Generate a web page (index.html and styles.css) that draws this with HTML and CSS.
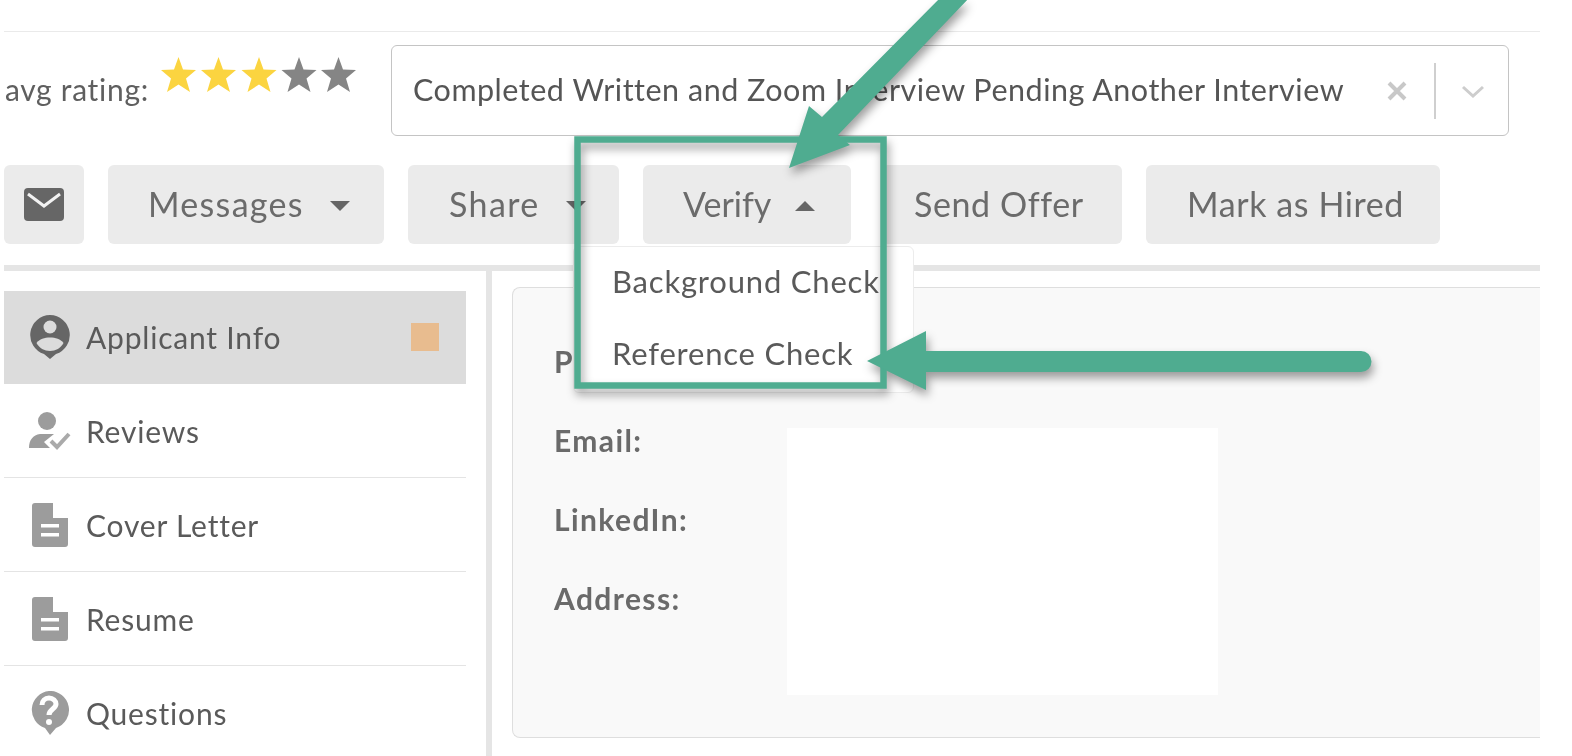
FILE: index.html
```html
<!DOCTYPE html>
<html lang="en">
<head>
<meta charset="utf-8">
<title>Applicant</title>
<link rel="stylesheet" href="styles.css">
</head>
<body>
<div class="page">
  <div class="topline"></div>
  <div class="status-row">
    <div class="rating">
      <span class="rating-label">avg rating:</span>
      <svg class="stars" viewBox="0 0 196 36" width="196" height="36">
        <polygon class="star-on" points="17.5,0 22,12.5 35,13 25,21.5 29,35 17.5,27.5 6,35 10,21.5 0,13 13,12.5"/>
        <polygon class="star-on" points="57.5,0 62,12.5 75,13 65,21.5 69,35 57.5,27.5 46,35 50,21.5 40,13 53,12.5"/>
        <polygon class="star-on" points="98,0 102.500,12.500 115.500,13 105.500,21.500 109.500,35 98,27.500 86.500,35 90.500,21.500 80.500,13 93.500,12.500"/>
        <polygon class="star-off" points="138,0 142.500,12.500 155.500,13 145.500,21.500 149.500,35 138,27.500 126.500,35 130.500,21.500 120.500,13 133.500,12.500"/>
        <polygon class="star-off" points="177.500,0 182,12.500 195,13 185,21.500 189,35 177.500,27.500 166,35 170,21.500 160,13 173,12.500"/>
      </svg>
    </div>
    <div class="select">
      <span class="select-value">Completed Written and Zoom Interview Pending Another Interview</span>
      <svg class="select-clear" viewBox="0 0 20 20" width="20" height="20"><path d="M2 2 L18 18 M18 2 L2 18"/></svg>
      <span class="select-sep"></span>
      <svg class="select-chevron" viewBox="0 0 24 14" width="24" height="14"><path d="M2 3 L12 12 L22 3"/></svg>
    </div>
  </div>
  <div class="actions">
    <button class="btn btn-icon" type="button">
      <svg viewBox="0 0 40 33" width="40" height="33"><rect width="40" height="33" rx="4" class="env-body"/><path class="env-flap" d="M4 6 L20 18 L36 6"/></svg>
    </button>
    <button class="btn btn-messages" type="button">Messages<span class="caret caret-down"></span></button>
    <button class="btn btn-share" type="button">Share<span class="caret caret-down"></span></button>
    <div class="verify-wrap">
      <button class="btn btn-verify" type="button">Verify<span class="caret caret-up"></span></button>
      <div class="menu">
        <div class="menu-item">Background Check</div>
        <div class="menu-item">Reference Check</div>
      </div>
    </div>
    <button class="btn btn-offer" type="button">Send Offer</button>
    <button class="btn btn-hired" type="button">Mark as Hired</button>
  </div>
  <div class="divider"></div>
  <div class="content">
    <nav class="sidebar">
      <a class="nav-item nav-active">
        <svg class="nav-icon" viewBox="0 0 40 44" width="40" height="44"><path class="ic-dark" d="M20 0a20 20 0 0 1 6 39l-6 5-6-5A20 20 0 0 1 20 0z"/><circle class="ic-white" cx="20" cy="12" r="6.500"/><path class="ic-white" d="M6.500 28c3-4 8-5.500 13.500-5.500S30.500 24 33.500 28c-2.500 5-8 8-13.500 8S9 33 6.500 28z"/></svg>
        <span class="nav-label">Applicant Info</span>
        <span class="nav-flag"></span>
      </a>
      <a class="nav-item">
        <svg class="nav-icon" viewBox="0 0 42 38" width="42" height="38"><circle class="ic-grey" cx="18" cy="9" r="9"/><path class="ic-grey" d="M0 36c0-8 4-13 11-14h14l-10 8 6 6z"/><path class="ic-check" d="M22 29l6 6 12-13"/></svg>
        <span class="nav-label">Reviews</span>
      </a>
      <a class="nav-item">
        <svg class="nav-icon" viewBox="0 0 36 44" width="36" height="44"><path class="ic-grey" d="M3 0H21V15H36V41a3 3 0 0 1-3 3H3a3 3 0 0 1-3-3V3a3 3 0 0 1 3-3z"/><rect class="ic-white" x="9" y="21" width="18" height="3.500"/><rect class="ic-white" x="9" y="30" width="18" height="3.500"/></svg>
        <span class="nav-label">Cover Letter</span>
      </a>
      <a class="nav-item">
        <svg class="nav-icon" viewBox="0 0 36 44" width="36" height="44"><path class="ic-grey" d="M3 0H21V15H36V41a3 3 0 0 1-3 3H3a3 3 0 0 1-3-3V3a3 3 0 0 1 3-3z"/><rect class="ic-white" x="9" y="21" width="18" height="3.500"/><rect class="ic-white" x="9" y="30" width="18" height="3.500"/></svg>
        <span class="nav-label">Resume</span>
      </a>
      <a class="nav-item nav-last">
        <svg class="nav-icon nav-icon-left" viewBox="0 0 38 44" width="38" height="44"><path class="ic-grey" d="M19 0a19 19 0 0 1 7 37l-6 7-5-7A19 19 0 0 1 19 0z"/><path class="ic-qmark" d="M12 14c0-4 3-7 7-7s7 3 7 6c0 5-7 5-7 11"/><circle class="ic-white" cx="19" cy="31" r="3"/></svg>
        <span class="nav-label">Questions</span>
      </a>
    </nav>
    <div class="vrule"></div>
    <section class="panel">
      <div class="field">P</div>
      <div class="field">Email:</div>
      <div class="field">LinkedIn:</div>
      <div class="field">Address:</div>
      <div class="redaction"></div>
    </section>
  </div>
  <svg class="annotations" viewBox="0 0 1572 756" width="1572" height="756">
    <rect class="callout" x="577.500" y="139.500" width="306" height="246"/>
    <polygon class="arrow" points="942,-4 971,-4 838,135 850,145 789,168 809,106 822,117"/>
    <path class="arrow" d="M867 361 L926 331 V351 H1361 a10.500 10.500 0 0 1 0 21 H926 V390 Z"/>
  </svg>
</div>
</body>
</html>
```
FILE: styles.css
```css
* { box-sizing: border-box; }
html, body { margin: 0; padding: 0; background: #fff; }
body { font-family: "Lato", "Liberation Sans", sans-serif; color: #5f5f5f; }

.page {
  position: relative;
  width: 1572px;
  height: 756px;
  overflow: hidden;
  padding: 31px 32px 0 4px;
  background: #fff;
  filter: blur(0.45px);
}

.topline { height: 1px; background: #eaeaea; }

.status-row { display: flex; align-items: flex-start; height: 133px; padding-top: 13px; }
.rating { display: flex; align-items: flex-start; width: 387px; height: 91px; }
.rating-label { font-size: 30px; line-height: 36px; letter-spacing: .7px; margin: 26px 0 0 1px; width: 156px; white-space: nowrap; }
.stars { margin-top: 12px; }
.star-on { fill: #fbd440; }
.star-off { fill: #858585; }

.select {
  display: flex;
  align-items: center;
  width: 1118px;
  height: 91px;
  border: 1.5px solid #c4c4c4;
  border-radius: 6px;
  padding-left: 21px;
}
.select-value { font-size: 30.5px; letter-spacing: .52px; width: 974px; padding-bottom: 4px; color: #555; white-space: nowrap; }
.select-clear { fill: none; stroke: #c8c8c8; stroke-width: 4; }
.select-sep { width: 1.500px; height: 56px; background: #cfcfcf; margin-left: 27px; }
.select-chevron { margin-left: 25px; fill: none; stroke: #cdcdcd; stroke-width: 3; }

.actions { display: flex; gap: 24px; height: 79px; }
.btn {
  display: flex;
  align-items: center;
  height: 79px;
  border: 0;
  border-radius: 6px;
  background: #ebebeb;
  color: #6b6b6b;
  font-family: inherit;
  font-size: 34px;
  letter-spacing: .6px;
  padding: 0 0 3px 41px;
  white-space: nowrap;
}
.btn-icon { width: 80px; padding: 0 0 0 20px; }
.btn-messages { width: 276px; letter-spacing: 1.3px; padding-left: 40px; }
.btn-share { width: 211px; letter-spacing: 1.4px; }
.btn-verify { width: 208px; padding-left: 40px; letter-spacing: 0; }
.btn-offer { width: 241px; margin-left: 6px; padding-left: 33px; }
.btn-hired { width: 294px; }
.env-body { fill: #666; }
.env-flap { fill: none; stroke: #f2f2f2; stroke-width: 3; }

.caret { width: 0; height: 0; margin: 5px 0 0 26px; border-left: 10px solid transparent; border-right: 10px solid transparent; }
.caret-down { border-top: 10px solid #666; }
.caret-up { margin-left: 24px; border-bottom: 10px solid #666; }

.verify-wrap { position: relative; }
.menu {
  position: absolute;
  left: -70px;
  top: 81px;
  width: 341px;
  height: 147px;
  background: #fff;
  border: 1px solid #ececec;
  border-radius: 6px;
  z-index: 2;
}
.menu-item { height: 72px; display: flex; align-items: center; padding: 0 0 5px 38px; font-size: 31px; letter-spacing: .8px; color: #5a5a5a; white-space: nowrap; }

.divider { height: 6px; margin-top: 21px; background: #e5e5e5; }

.content { display: flex; height: 485px; }
.sidebar { width: 462px; padding-top: 20px; }
.nav-item { display: flex; align-items: center; height: 94px; padding-left: 25px; border-bottom: 1.500px solid #e4e4e4; }
.nav-active { height: 93px; padding-bottom: 2px; background: #dcdcdc; border-bottom: 0; }
.nav-last { border-bottom: 0; }
.nav-icon { flex: none; width: 42px; margin-right: 15px; }
.nav-icon-left { margin-left: -1px; margin-right: 16px; }
.nav-label { font-size: 30px; letter-spacing: .8px; color: #5a5a5a; flex: 1; }
.nav-flag { width: 28px; height: 28px; margin-right: 27px; background: #e8bc8f; }
.ic-dark { fill: #666; }
.ic-grey { fill: #9c9c9c; }
.ic-white { fill: #fff; }
.nav-active .ic-white { fill: #dcdcdc; }
.ic-check { fill: none; stroke: #aaa; stroke-width: 4; }
.ic-qmark { fill: none; stroke: #fff; stroke-width: 5; }

.vrule { width: 6px; height: 485px; margin-left: 20px; background: #e5e5e5; }

.panel {
  position: relative;
  flex: 1;
  height: 451px;
  margin: 16px 0 0 20px;
  padding: 33px 0 0 41px;
  background: #f9f9f9;
  border: 1.500px solid #dedede;
  border-right: 0;
  border-radius: 8px 0 0 8px;
}
.field { height: 79px; display: flex; align-items: center; font-size: 30px; letter-spacing: 1.4px; font-weight: 700; color: #6a6a6a; }
.redaction { position: absolute; left: 274px; top: 140px; width: 431px; height: 267px; background: #fff; }

.annotations { position: absolute; left: 0; top: 0; z-index: 3; pointer-events: none; filter: drop-shadow(2px 6px 5px rgba(0,0,0,.38)); }
.callout { fill: none; stroke: #4fac90; stroke-width: 6.500; }
.arrow { fill: #4fac90; }
```
